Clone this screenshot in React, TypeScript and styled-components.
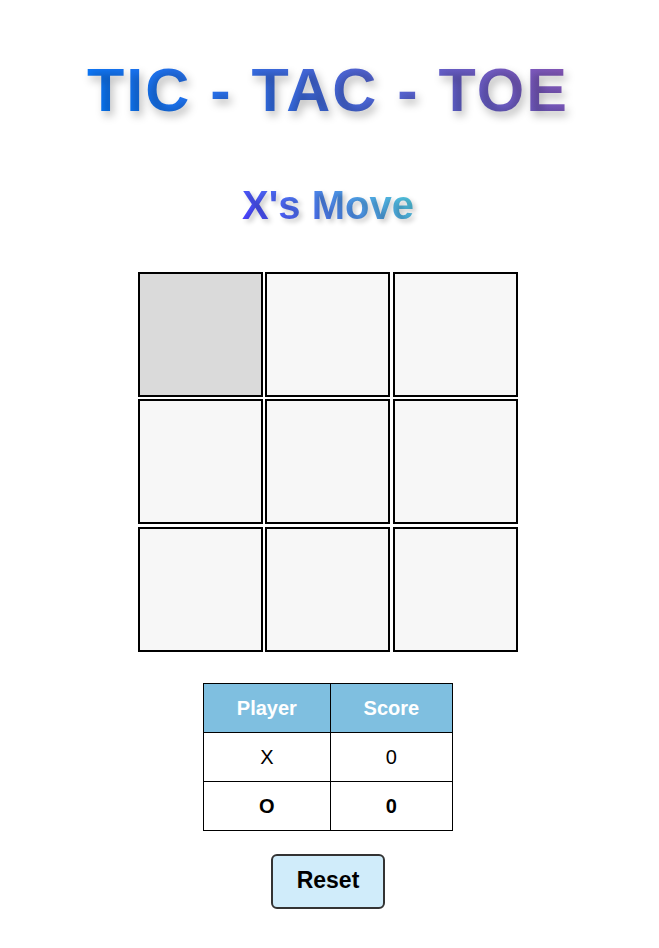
import React, { useState } from "react";
import styled, { createGlobalStyle } from "styled-components";

const GlobalStyle = createGlobalStyle`
  *, *::before, *::after {
    box-sizing: border-box;
  }
  body {
    margin: 0;
    background: #ffffff;
    color: #000000;
    font-family: "Liberation Sans", Arial, Helvetica, sans-serif;
  }
`;

const Page = styled.main`
  display: flex;
  flex-direction: column;
  align-items: center;
  padding: 56px 3px 39px 0;
`;

const GradientText = styled.h1`
  margin: 0;
  font-weight: 700;
  text-align: center;
  color: transparent;
  -webkit-background-clip: text;
  background-clip: text;
`;

const Title = styled(GradientText)`
  font-size: 61px;
  line-height: 68px;
  letter-spacing: 2px;
  background-image: linear-gradient(45deg, #007bff, #8a56b8);
  text-shadow: 3px 5px 8px rgba(0, 0, 0, 0.25);
`;

const Status = styled(GradientText)`
  margin-top: 58px;
  font-size: 40px;
  line-height: 46px;
  background-image: linear-gradient(45deg, #4a3aff, #50d0d8);
  text-shadow: 3px 3px 5px rgba(0, 0, 0, 0.2);
`;

const Board = styled.div`
  display: grid;
  grid-template-columns: repeat(3, 1fr);
  grid-template-rows: repeat(3, 1fr);
  gap: 2px;
  width: 380px;
  max-width: 100%;
  aspect-ratio: 1;
  margin-top: 44px;
`;

const Cell = styled.button<{ $active: boolean }>`
  width: 125px;
  height: 125px;
  padding: 0;
  border: 2px solid #000000;
  border-radius: 0;
  background: ${({ $active }) => ($active ? "#dadada" : "#f7f7f7")};
  font: inherit;
  font-size: 60px;
  cursor: pointer;
`;

const ScoreTable = styled.table`
  width: 250px;
  margin-top: 31px;
  border-collapse: collapse;
  font-size: 20px;
  line-height: 24px;
  text-align: center;
`;

const HeadCell = styled.th`
  padding: 12px 32px;
  border: 1px solid #000000;
  background: #7fbfe0;
  color: #ffffff;
`;

const ScoreRow = styled.tr<{ $bold: boolean }>`
  font-weight: ${({ $bold }) => ($bold ? 700 : 400)};
`;

const ScoreCell = styled.td`
  padding: 12px 32px;
  border: 1px solid #000000;
`;

const ResetButton = styled.button`
  margin-top: 23px;
  padding: 12px 24px 15px;
  border: 2px solid #333333;
  border-radius: 6px;
  background: #d0ecfa;
  color: #000000;
  font-family: inherit;
  font-size: 23px;
  font-weight: 700;
  line-height: 24px;
  cursor: pointer;
`;

type Mark = "X" | "O" | "";

const emptyBoard: Mark[] = Array(9).fill("");
const lines = [
  [0, 1, 2], [3, 4, 5], [6, 7, 8],
  [0, 3, 6], [1, 4, 7], [2, 5, 8],
  [0, 4, 8], [2, 4, 6],
];

function findWinner(board: Mark[]): Mark {
  const line = lines.find(([a, b, c]) => board[a] && board[a] === board[b] && board[a] === board[c]);
  return line ? board[line[0]] : "";
}

export default function App() {
  const [board, setBoard] = useState<Mark[]>(emptyBoard);
  const [scores, setScores] = useState({ X: 0, O: 0 });
  const [active, setActive] = useState(0);

  const turn = board.filter(Boolean).length % 2 === 0 ? "X" : "O";
  const winner = findWinner(board);
  const status = winner ? `${winner} Wins` : board.every(Boolean) ? "Draw" : `${turn}'s Move`;

  const play = (index: number) => {
    if (board[index] || winner) return;
    const next = board.map((mark, i) => (i === index ? turn : mark)) as Mark[];
    const won = findWinner(next);
    setBoard(next);
    if (won) setScores((s) => ({ ...s, [won]: s[won] + 1 }));
  };

  return (
    <>
      <GlobalStyle />
      <Page>
        <Title>TIC - TAC - TOE</Title>
        <Status as="h2">{status}</Status>
        <Board>
          {board.map((mark, index) => (
            <Cell
              key={index}
              type="button"
              $active={index === active}
              aria-label={`Square ${index + 1}`}
              onMouseEnter={() => setActive(index)}
              onClick={() => play(index)}
            >
              {mark}
            </Cell>
          ))}
        </Board>
        <ScoreTable>
          <thead>
            <tr>
              <HeadCell scope="col">Player</HeadCell>
              <HeadCell scope="col">Score</HeadCell>
            </tr>
          </thead>
          <tbody>
            {(["X", "O"] as const).map((player) => (
              <ScoreRow key={player} $bold={player === "O"}>
                <ScoreCell>{player}</ScoreCell>
                <ScoreCell>{scores[player]}</ScoreCell>
              </ScoreRow>
            ))}
          </tbody>
        </ScoreTable>
        <ResetButton type="button" onClick={() => setBoard(emptyBoard)}>
          Reset
        </ResetButton>
      </Page>
    </>
  );
}
